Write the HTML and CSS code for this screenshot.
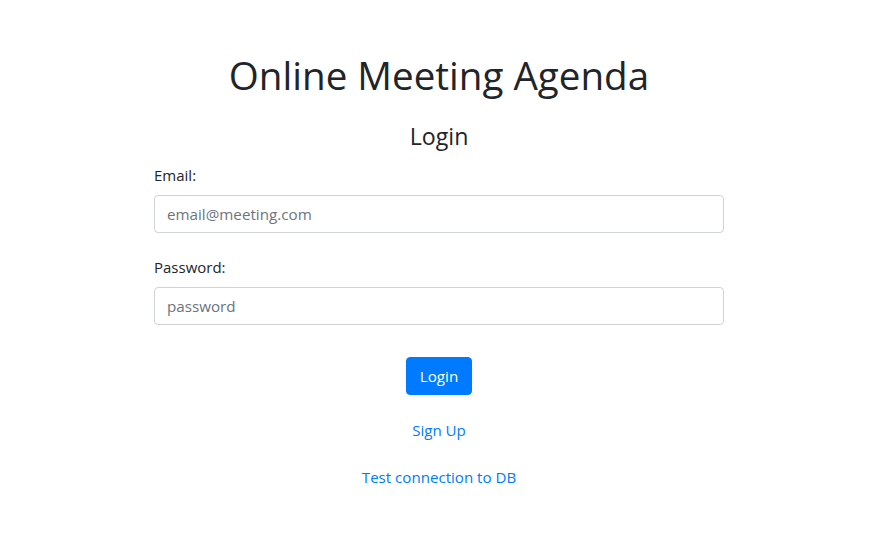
FILE: index.html
```html
<!DOCTYPE html>
<html lang="en">
<head>
<meta charset="utf-8">
<title>Online Meeting Agenda</title>
<link rel="stylesheet" href="styles.css">
</head>
<body>
<main class="page">
  <h1 class="title">Online Meeting Agenda</h1>
  <h2 class="subtitle">Login</h2>
  <form class="form">
    <div class="field">
      <label class="label" for="email">Email:</label>
      <input class="input" id="email" type="email" placeholder="email@meeting.com">
    </div>
    <div class="field">
      <label class="label" for="password">Password:</label>
      <input class="input" id="password" type="password" placeholder="password">
    </div>
    <div class="actions">
      <button class="btn" type="button">Login</button>
    </div>
  </form>
  <div class="links">
    <a class="link" href="#">Sign Up</a>
    <a class="link" href="#">Test connection to DB</a>
  </div>
</main>
</body>
</html>
```

FILE: styles.css
```css
html, body {
  margin: 0;
  padding: 0;
  background: #fff;
}
body {
  font-family: "Open Sans", "Noto Sans", sans-serif;
  color: #212529;
  font-size: 16px;
}
.page {
  width: 570px;
  padding-right: 1px;
  margin: 0 auto;
  padding-top: 51px;
  display: flex;
  flex-direction: column;
}
.title {
  margin: 0;
  font-size: 38.6px;
  line-height: 48px;
  font-weight: 400;
  text-align: center;
}
.subtitle {
  margin: 23px 0 0;
  font-size: 23.2px;
  line-height: 29px;
  font-weight: 400;
  text-align: center;
}
.form {
  margin-top: 12px;
  display: flex;
  flex-direction: column;
  gap: 22px;
}
.field {
  display: flex;
  flex-direction: column;
  gap: 8px;
}
.label {
  font-size: 15px;
  line-height: 24px;
}
.input {
  box-sizing: border-box;
  height: 38px;
  width: 100%;
  padding: 6px 12px;
  font-family: inherit;
  font-size: 15.2px;
  color: #495057;
  border: 1px solid #ced4da;
  border-radius: 4px;
  background: #fff;
  outline: none;
}
.input::placeholder {
  color: #6c757d;
}
.actions {
  display: flex;
  justify-content: center;
  margin-top: 10px;
}
.btn {
  height: 38px;
  padding: 0 13px;
  font-family: inherit;
  font-size: 15.2px;
  color: #fff;
  background: #007bff;
  border: 1px solid #007bff;
  border-radius: 4px;
}
.links {
  margin-top: 23px;
  display: flex;
  flex-direction: column;
  align-items: center;
  gap: 23px;
}
.link {
  color: #007bff;
  text-decoration: none;
  font-size: 15.1px;
  line-height: 24px;
}
```
